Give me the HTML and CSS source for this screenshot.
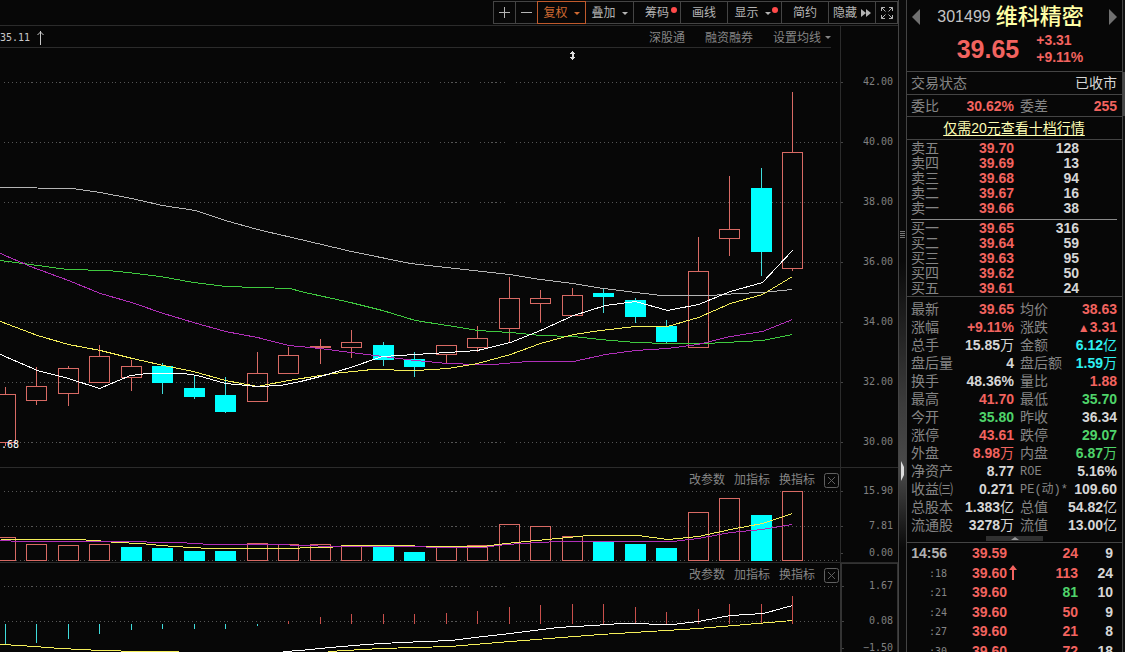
FILE: index.html
```html
<!DOCTYPE html>
<html lang="zh-CN">
<head>
<meta charset="utf-8">
<title>维科精密 301499</title>
<link rel="stylesheet" href="styles.css">
</head>
<body>
<main class="charts">
  <nav class="toolbar" aria-label="图表工具">
    <button class="tool icon" aria-label="放大"><svg width="13" height="13"><path d="M6.5 1v11M1 6.5h11"/></svg></button>
    <button class="tool icon" aria-label="缩小"><svg width="13" height="13"><path d="M1 6.5h11"/></svg></button>
    <button class="tool wide active">复权<i class="caret"></i></button>
    <button class="tool wide">叠加<i class="caret"></i></button>
    <button class="tool">筹码<i class="dot"></i></button>
    <button class="tool">画线</button>
    <button class="tool wider">显示<i class="caret"></i><i class="dot"></i></button>
    <button class="tool">简约</button>
    <button class="tool tight">隐藏<svg width="10" height="8"><path class="solid" d="M0 0l5 4-5 4zM5 0l5 4-5 4z"/></svg></button>
    <button class="tool icon" aria-label="全屏"><svg width="14" height="14"><path d="M1.500 5V1.500H5M1.500 1.500l4 4M9 1.500h3.500V5M12.500 1.500l-4 4M1.500 9v3.500H5M1.500 12.500l4-4M12.500 9v3.500H9M12.500 12.500l-4-4"/></svg></button>
  </nav>

  <section class="pane price-pane">
    <div class="plot">
      <div class="subbar">
        <span class="high">35.11<svg width="9" height="15"><path d="M4.500 1v14M1.500 5l3-3 3 3"/></svg></span>
        <button class="link">深股通</button>
        <button class="link">融资融券</button>
        <button class="link">设置均线<i class="caret"></i></button>
      </div>
      <div class="canvas">
        <svg class="chart" viewBox="0 48 840 419" preserveAspectRatio="none" aria-label="K线图">
          <g transform="translate(.5 .5)">
            <path class="grid" d="M3 82H838M3 142H838M3 202H838M3 262H838M3 322H838M3 382H838M3 442H838"/>
            <g class="up">
              <path d="M5 386V394M5 442V445M36 366V386M36 400V404M68 365V368M68 393V405M99 344V356M131 359V366M131 377V390M257 351V373M288 346V355M320 338V363M351 329V342M351 347V357M446 344V345M446 354V363M477 325V338M477 347V351M509 276V298M509 328V342M540 289V298M540 303V322M572 287V295M698 236V271M729 175V229M729 238V255M792 91V152M792 268V270"/>
              <path d="M-5 394h20v48h-20zM26 386h20v14h-20zM58 368h20v25h-20zM89 356h20v26h-20zM121 366h20v11h-20zM247 373h20v28h-20zM278 355h20v18h-20zM310 346h20v1h-20zM341 342h20v5h-20zM436 345h20v9h-20zM467 338h20v9h-20zM499 298h20v30h-20zM530 298h20v5h-20zM562 295h20v20h-20zM688 271h20v76h-20zM719 229h20v9h-20zM782 152h20v116h-20z"/>
            </g>
            <g class="down">
              <path d="M162 362V393M194 375V398M225 376V412M383 341V365M414 351V376M603 287V312M635 297V322M666 319V343M761 167V275"/>
              <path class="body" d="M152 366h20v16h-20zM184 388h20v8h-20zM215 395h20v16h-20zM373 345h20v14h-20zM404 359h20v7h-20zM593 293h20v3h-20zM625 300h20v16h-20zM656 326h20v15h-20zM751 188h20v63h-20z"/>
            </g>
            <polyline class="line gray" points="0,187 72,188 100,192 131,198 162,205 195,210 225,220 257,229 300,239 351,251 410,263 446,267 509,274 540,279 572,283 603,288 635,292 661,295 710,295 737,293 761,292 792,289"/>
            <polyline class="line green" points="0,260 30,264 67,269 107,270 127,272 160,276 193,282 225,286 290,288 300,291 350,302 382,310 415,320 447,325 477,330 510,332 540,335 573,336 600,339 635,342 667,343 705,343 762,340 792,334"/>
            <polyline class="line violet" points="0,253 30,266 68,280 100,293 131,302 163,313 193,322 225,331 257,337 288,345 320,348 350,352 382,356 415,360 447,363 477,364 493,364 527,361 573,361 605,354 635,350 667,348 697,344 730,336 762,331 792,319"/>
            <polyline class="line yellow" points="0,321 37,335 68,344 100,350 132,358 163,365 193,371 225,380 257,386 288,380 333,373 372,369 415,370 448,368 477,363 510,354 540,343 573,334 600,330 635,326 667,326 698,317 730,303 762,294 792,276"/>
            <polyline class="line white" points="0,354 37,370 68,378 99,388 130,375 147,373 183,373 197,375 225,383 257,386 280,385 300,381 320,376 350,367 382,356 415,354 447,352 477,350 510,342 540,330 573,315 605,305 635,301 667,310 698,304 730,291 762,282 792,250"/>
          </g>
          <path class="cursor" d="M572.500 51l3 3h-2v3h2l-3 3-3-3h2v-3h-2z"/>
        </svg>
        <span class="low">.68</span>
      </div>
    </div>
    <ul class="axis">
      <li>42.00</li><li>40.00</li><li>38.00</li><li>36.00</li><li>34.00</li><li>32.00</li><li>30.00</li>
    </ul>
  </section>

  <section class="pane volume-pane">
    <div class="plot">
      <div class="pane-tools">
        <button class="link">改参数</button><button class="link">加指标</button><button class="link">换指标</button>
        <button class="close" aria-label="关闭"><svg width="15" height="15"><rect x=".5" y=".5" width="14" height="14" rx="2"/><path d="M4 4l7 7M11 4l-7 7"/></svg></button>
      </div>
      <svg class="chart" viewBox="0 490 840 72" preserveAspectRatio="none" aria-label="成交量">
        <g transform="translate(.5 .5)">
          <path class="grid" d="M3 491H838M3 526H838M3 560H838"/>
          <path class="up" d="M-5 560V537h20v23zM26 560V544h20v16zM58 560V545h20v15zM89 560V544h20v16zM247 560V543h20v17zM278 560V544h20v16zM310 560V544h20v16zM341 560V545h20v15zM436 560V546h20v14zM467 560V545h20v15zM499 560V524h20v36zM530 560V526h20v34zM562 560V536h20v24zM688 560V512h20v48zM719 560V498h20v62zM782 560V491h20v69z"/>
          <path class="down body" d="M121 560V547h20v13zM152 560V548h20v12zM184 560V551h20v9zM215 560V551h20v9zM373 560V547h20v13zM404 560V552h20v8zM593 560V542h20v18zM625 560V544h20v16zM656 560V548h20v12zM751 560V515h20v45z"/>
          <polyline class="line yellow" points="0,539 76,539 95,540 116,542 140,543 160,545 190,547 210,548 272,548 328,547 345,545 398,545 430,546 483,546 505,543 557,538 588,535 638,535 667,539 698,536 730,529 762,523 792,513"/>
          <polyline class="line violet" points="0,540 20,541 115,541 178,542 210,544 272,544 305,545 330,546 400,546 450,547 483,547 505,544 557,541 672,541 698,538 730,532 762,529 792,524"/>
        </g>
      </svg>
    </div>
    <ul class="axis">
      <li>15.90</li><li>7.81</li><li class="floor">0.00</li>
    </ul>
  </section>

  <section class="pane macd-pane">
    <div class="plot">
      <div class="pane-tools">
        <button class="link">改参数</button><button class="link">加指标</button><button class="link">换指标</button>
        <button class="close" aria-label="关闭"><svg width="15" height="15"><rect x=".5" y=".5" width="14" height="14" rx="2"/><path d="M4 4l7 7M11 4l-7 7"/></svg></button>
      </div>
      <svg class="chart" viewBox="0 585 840 67" preserveAspectRatio="none" aria-label="MACD">
        <g transform="translate(.5 .5)">
          <path class="grid" d="M3 586H838M3 621H838"/>
          <path class="down" d="M5 623V644M36 623V642M68 623V638M99 623V633M131 623V629M162 623V628M194 623V628M225 623V628M257 623V625"/>
          <path class="up strong" d="M288 620V623M320 616V623M351 613V623M383 613V623M414 613V623M446 612V623M477 610V623M509 606V623M540 604V623M572 603V623M603 603V623M635 606V623M666 611V623M698 608V623M729 603V623M761 603V623M792 595V623"/>
          <polyline class="line white" points="283,651 300,650 330,647 365,644 400,642 450,640 483,636 510,633 557,627 593,625 620,623 643,623 653,624 672,624 698,621 730,615 763,613 792,605"/>
          <polyline class="line yellow" points="0,644 20,645 60,648 100,650 140,651 178,651"/>
          <polyline class="line yellow" points="328,651 380,648 450,646 510,641 600,634 698,628 792,620"/>
        </g>
      </svg>
    </div>
    <ul class="axis">
      <li>1.67</li><li>0.08</li><li class="floor">−1.50</li>
    </ul>
  </section>
</main>

<div class="splitter">
  <i class="grip"></i>
  <svg class="fold" width="5" height="20"><path d="M1 0l3 6v8l-3 6z"/></svg>
</div>

<aside class="quote">
  <header class="title">
    <div class="name-row">
      <button class="prev" aria-label="上一只"></button>
      <h1><span class="code">301499</span>维科精密</h1>
      <button class="next" aria-label="下一只"></button>
    </div>
    <div class="price-row">
      <strong class="last">39.65</strong>
      <p class="change">+3.31<br>+9.11%</p>
    </div>
  </header>
  <div class="row status"><span>交易状态</span><span class="w">已收市</span></div>
  <div class="row ratio"><span class="pair"><span>委比</span><b class="r">30.62%</b></span><span class="pair"><span>委差</span><b class="r">255</b></span></div>
  <div class="row promo"><a href="#depth">仅需20元查看十档行情</a></div>

  <table class="book" id="depth">
    <tbody>
      <tr><th>卖五</th><td class="r">39.70</td><td>128</td></tr>
      <tr><th>卖四</th><td class="r">39.69</td><td>13</td></tr>
      <tr><th>卖三</th><td class="r">39.68</td><td>94</td></tr>
      <tr><th>卖二</th><td class="r">39.67</td><td>16</td></tr>
      <tr><th>卖一</th><td class="r">39.66</td><td>38</td></tr>
    </tbody>
  </table>
  <hr>
  <table class="book">
    <tbody>
      <tr><th>买一</th><td class="r">39.65</td><td>316</td></tr>
      <tr><th>买二</th><td class="r">39.64</td><td>59</td></tr>
      <tr><th>买三</th><td class="r">39.63</td><td>95</td></tr>
      <tr><th>买四</th><td class="r">39.62</td><td>50</td></tr>
      <tr><th>买五</th><td class="r">39.61</td><td>24</td></tr>
    </tbody>
  </table>

  <div class="stats">
    <dl>
      <div><dt>最新</dt><dd class="r">39.65</dd></div>
      <div><dt>涨幅</dt><dd class="r">+9.11%</dd></div>
      <div><dt>总手</dt><dd>15.85<i>万</i></dd></div>
      <div><dt>盘后量</dt><dd>4</dd></div>
      <div><dt>换手</dt><dd>48.36%</dd></div>
      <div><dt>最高</dt><dd class="r">41.70</dd></div>
      <div><dt>今开</dt><dd class="g">35.80</dd></div>
      <div><dt>涨停</dt><dd class="r">43.61</dd></div>
      <div><dt>外盘</dt><dd class="r">8.98<i>万</i></dd></div>
      <div><dt>净资产</dt><dd>8.77</dd></div>
      <div><dt>收益㈢</dt><dd>0.271</dd></div>
      <div><dt>总股本</dt><dd>1.383<i>亿</i></dd></div>
      <div><dt>流通股</dt><dd>3278<i>万</i></dd></div>
    </dl>
    <dl>
      <div><dt>均价</dt><dd class="r">38.63</dd></div>
      <div><dt>涨跌</dt><dd class="r"><span class="rise">▲</span>3.31</dd></div>
      <div><dt>金额</dt><dd class="c">6.12<i>亿</i></dd></div>
      <div><dt>盘后额</dt><dd class="c">1.59<i>万</i></dd></div>
      <div><dt>量比</dt><dd class="r">1.88</dd></div>
      <div><dt>最低</dt><dd class="g">35.70</dd></div>
      <div><dt>昨收</dt><dd>36.34</dd></div>
      <div><dt>跌停</dt><dd class="g">29.07</dd></div>
      <div><dt>内盘</dt><dd class="g">6.87<i>万</i></dd></div>
      <div><dt class="latin">ROE</dt><dd>5.16%</dd></div>
      <div><dt class="latin">PE(动)*</dt><dd>109.60</dd></div>
      <div><dt>总值</dt><dd>54.82<i>亿</i></dd></div>
      <div><dt>流值</dt><dd>13.00<i>亿</i></dd></div>
    </dl>
  </div>
  <button class="collapse" aria-label="收起"></button>

  <table class="ticks">
    <tbody>
      <tr><th class="full">14:56</th><td class="r p">39.59</td><td class="r">24</td><td>9</td></tr>
      <tr><th>:18</th><td class="r p">39.60<svg width="8" height="15"><path d="M4 0l4 5H5v10H3V5H0z"/></svg></td><td class="r">113</td><td>24</td></tr>
      <tr><th>:21</th><td class="r p">39.60</td><td class="g">81</td><td>10</td></tr>
      <tr><th>:24</th><td class="r p">39.60</td><td class="r">50</td><td>9</td></tr>
      <tr><th>:27</th><td class="r p">39.60</td><td class="r">21</td><td>8</td></tr>
      <tr><th>:30</th><td class="r p">39.60</td><td class="r">72</td><td>18</td></tr>
    </tbody>
  </table>
</aside>
<div class="edge"><i class="thumb"></i></div>
</body>
</html>
```
FILE: styles.css
```css
* { box-sizing: border-box; }

:root {
  --bg: #070707;
  --rule: #2b2b2b;
  --frame: #444;
  --label: #858585;
  --text: #d6d6d6;
  --red: #f2635f;
  --green: #4fd46a;
  --cyan: #2ef2f2;
  --candle: #d86a64;
}

body {
  margin: 0;
  height: 100vh;
  display: grid;
  grid-template-columns: minmax(0, 1fr) 7px 217px 2px;
  grid-template-rows: minmax(0, 1fr);
  overflow: hidden;
  background: var(--bg);
  color: var(--label);
  font: 14px/18px "Liberation Sans", "Noto Sans CJK SC", sans-serif;
}

h1, p, ul, dl, dd { margin: 0; padding: 0; }
ul { list-style: none; }
i { font-style: normal; }
button {
  margin: 0;
  padding: 0;
  border: 0;
  background: none;
  color: inherit;
  font: inherit;
  white-space: nowrap;
}
svg { display: block; fill: none; stroke: currentColor; }
table { border-collapse: collapse; table-layout: fixed; width: 100%; }
th { font-weight: 400; text-align: left; padding: 0; }
td { font-weight: 700; text-align: right; padding: 0; color: var(--text); }

td.r, dd.r, .r { color: var(--red); }
td.g, dd.g, .g { color: var(--green); }
dd.c { color: var(--cyan); }
.w { color: var(--text); }

/* Charts column */
.charts {
  display: flex;
  flex-direction: column;
  border-right: 1px solid var(--frame);
}

.toolbar {
  display: flex;
  justify-content: flex-end;
  height: 26px;
  padding: 1px 0;
  border-bottom: 1px solid var(--rule);
}
.tool {
  position: relative;
  display: flex;
  align-items: center;
  justify-content: center;
  gap: 6px;
  width: 48px;
  height: 23px;
  margin-left: -1px;
  padding-top: 1px;
  border: 1px solid var(--frame);
  color: #b4b4b4;
  font-size: 12px;
}
.tool.icon { width: 23px; padding-top: 0; }
.tool.wide { width: 49px; }
.tool.wider { width: 55px; padding-right: 4px; }
.tool.tight { gap: 4px; }
.tool.active { z-index: 1; border-color: #c05a2c; color: #d06a32; }
.solid { fill: currentColor; stroke: none; }
.caret {
  border: 3px solid transparent;
  border-top-color: currentColor;
  border-bottom: 0;
}
.dot {
  position: absolute;
  top: 5px;
  right: 3px;
  width: 6px;
  height: 6px;
  border-radius: 50%;
  background: #ff4a4a;
}

.pane {
  display: grid;
  grid-template-columns: minmax(0, 1fr) 58px;
  grid-template-rows: minmax(0, 1fr);
  border-bottom: 1px solid var(--rule);
  overflow: hidden;
}
.price-pane { flex: 1; min-height: 0; }
.volume-pane { height: 95px; }
.macd-pane { height: 89px; border-bottom: 0; }

.plot { display: flex; flex-direction: column; min-height: 0; }
.canvas { position: relative; flex: 1; min-height: 0; }
.canvas .chart { height: 100%; }
.chart {
  flex: 1;
  min-height: 0;
  width: 100%;
  shape-rendering: crispEdges;
}

.subbar {
  display: flex;
  align-items: center;
  justify-content: flex-end;
  gap: 20px;
  height: 22px;
  margin-right: 9px;
  padding-top: 2px;
  border-bottom: 1px solid var(--rule);
  font-size: 12px;
}
.high {
  display: flex;
  align-items: center;
  gap: 6px;
  margin-right: auto;
  color: #c8c8c8;
  font-family: "DejaVu Sans Mono", monospace;
  font-size: 10px;
}
.low {
  position: absolute;
  bottom: 13px;
  left: 1px;
  color: #fff;
  font-family: "DejaVu Sans Mono", monospace;
  font-size: 10px;
}
.link { display: flex; align-items: center; gap: 4px; font-size: 12px; }

.pane-tools {
  display: flex;
  align-items: center;
  justify-content: flex-end;
  gap: 9px;
  height: 22px;
  padding: 2px 1px 0 0;
}
.close { color: #606060; }

.axis {
  border-left: 1px solid var(--rule);
  padding-right: 5px;
  font-family: "DejaVu Sans Mono", monospace;
  font-size: 10px;
  color: #808080;
}
.axis li {
  display: flex;
  align-items: center;
  justify-content: space-between;
  height: 18px;
}
.axis li::before { content: ""; width: 2px; height: 1px; background: #444; }
.price-pane .axis {
  display: flex;
  flex-direction: column;
  justify-content: space-between;
  padding-top: 47px;
  padding-bottom: 16px;
}
.volume-pane .axis { padding-top: 14px; }
.macd-pane .axis {
  padding-top: 13px;
  border: 1px solid #333;
  border-bottom: 0;
  border-left-width: 2px;
  padding-right: 4px;
}
.volume-pane li + li, .macd-pane li + li { margin-top: 17px; }
.pane li.floor { margin-top: 9px; }

/* Series */
.grid { stroke: #555; stroke-dasharray: 1 3; }
.up { stroke: var(--candle); }
.up.strong { stroke: #c94f4b; }
.down { stroke: #3fdcdc; }
.body { stroke: #00ffff; fill: #00ffff; }
.gray { stroke: #b4b4b4; }
.white { stroke: #fff; }
.yellow { stroke: #f4ee5a; }
.green { stroke: #3fc93f; }
.violet { stroke: #b02fb8; }
.cursor { fill: #ddd; stroke: none; }

/* Splitter */
.splitter {
  position: relative;
  background: linear-gradient(#0a0a0a 40%, #3c3c3c 62%, #4a4a4a 72%, #0a0a0a 84%);
}
.grip {
  position: absolute;
  top: 231px;
  left: 1px;
  width: 5px;
  height: 8px;
  background: repeating-linear-gradient(#777 0 1px, transparent 1px 2px);
}
.fold { position: absolute; top: 461px; left: 1px; fill: #ddd; stroke: none; }

/* Quote column */
.quote {
  border: solid var(--frame);
  border-width: 0 1px;
  overflow: hidden;
}
.title { height: 71px; padding: 0 5px; }
.name-row {
  display: flex;
  align-items: center;
  justify-content: space-between;
  height: 34px;
}
h1 {
  display: flex;
  align-items: center;
  gap: 5px;
  padding-right: 8px;
  font-size: 22px;
  font-weight: 500;
  line-height: 32px;
  color: #ffffa6;
}
.code { color: #c4c4c4; font-size: 16px; font-weight: 400; }
.prev, .next { border: 8px solid transparent; }
.prev { border-left: 0; border-right-color: #707070; }
.next { border-right: 0; border-left-color: #707070; }
.price-row {
  display: flex;
  align-items: center;
  justify-content: center;
  gap: 17px;
  margin-top: -2px;
  padding-left: 11px;
  color: var(--red);
}
.last { font-size: 25px; line-height: 30px; }
.change { font-weight: 700; line-height: 17px; }

.row {
  display: flex;
  align-items: center;
  justify-content: space-between;
  height: 22px;
  padding: 0 5px 0 4px;
  border-top: 1px solid var(--frame);
}
.row.status { height: 23px; }
.row.promo { height: 24px; justify-content: center; border-bottom: 1px solid var(--frame); }
.promo a { color: #ffffb4; text-underline-offset: 2px; }
.ratio { gap: 6px; }
.pair { display: flex; justify-content: space-between; width: 97px; }
.pair:first-child { width: 103px; }

.book { margin: 1px 0 0 4px; width: 168px; line-height: 15px; }
.book th { width: 56px; }
.book td { width: 65px; }
.book td:nth-child(2) { width: 47px; }
.book tr { height: 15px; }
hr { margin: 3px 5px 0 4px; border: 0; border-top: 1px solid #8a8a8a; }

.stats {
  display: grid;
  grid-template-columns: 103px 1fr;
  gap: 6px;
  padding: 3px 5px 0 4px;
  border-top: 1px solid var(--frame);
}
.stats div { display: flex; justify-content: space-between; height: 18px; white-space: nowrap; }
dd { font-weight: 700; color: var(--text); }
dd i { font-weight: 400; }
.latin { font-family: "Liberation Mono", "Noto Sans CJK SC", monospace; font-size: 12px; line-height: 20px; }
.rise { font-size: 12px; }

.collapse {
  display: flex;
  align-items: center;
  justify-content: center;
  width: 57px;
  height: 5px;
  margin: 2px auto 1px;
  background: #303030;
}
.collapse::before {
  content: "";
  border: 4px solid transparent;
  border-bottom: 3px solid #999;
  border-top: 0;
}

.ticks {
  border-top: 1px solid var(--frame);
  border-collapse: separate;
  border-spacing: 0;
  padding: 1px 9px 0 4px;
  line-height: 19px;
}
.ticks tr { height: 19px; }
.ticks tr:nth-child(even) { height: 20px; }
.ticks th {
  width: 36px;
  text-align: right;
  font-family: "DejaVu Sans Mono", monospace;
  font-size: 10px;
}
.ticks th.full { color: #b0b0b0; font: 700 14px/19px "Liberation Sans", sans-serif; }
.ticks td { width: 35px; }
.ticks td.p { width: 78px; padding-left: 25px; text-align: left; }
.ticks td:nth-child(3) { width: 53px; }
.ticks svg { display: inline-block; vertical-align: -2px; margin-left: 2px; fill: currentColor; stroke: none; }

.edge { background: #111; padding-top: 72px; }
.thumb { display: block; height: 44px; background: #484848; }
```
